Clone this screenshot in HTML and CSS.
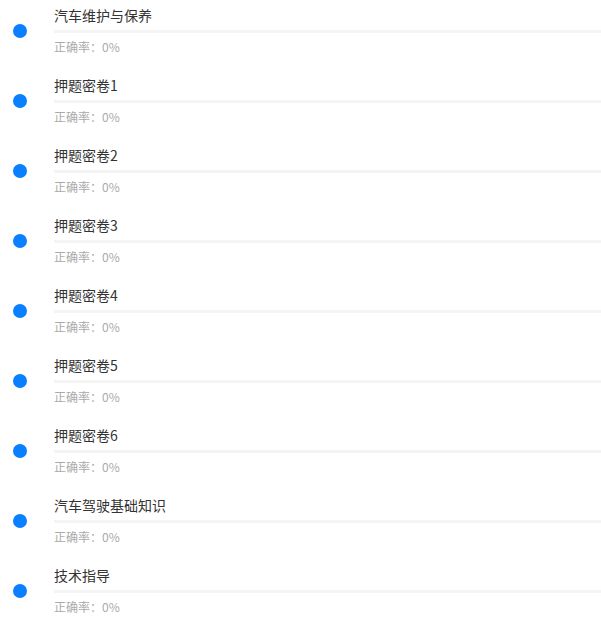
FILE: index.html
```html
<!DOCTYPE html>
<html lang="zh">
<head>
<meta charset="utf-8">
<link rel="stylesheet" href="styles.css">
</head>
<body>
<ul class="list">
  <li class="item"><span class="dot"></span><div class="content"><div class="title">汽车维护与保养</div><div class="bar"></div><div class="rate">正确率：0%</div></div></li>
  <li class="item"><span class="dot"></span><div class="content"><div class="title">押题密卷1</div><div class="bar"></div><div class="rate">正确率：0%</div></div></li>
  <li class="item"><span class="dot"></span><div class="content"><div class="title">押题密卷2</div><div class="bar"></div><div class="rate">正确率：0%</div></div></li>
  <li class="item"><span class="dot"></span><div class="content"><div class="title">押题密卷3</div><div class="bar"></div><div class="rate">正确率：0%</div></div></li>
  <li class="item"><span class="dot"></span><div class="content"><div class="title">押题密卷4</div><div class="bar"></div><div class="rate">正确率：0%</div></div></li>
  <li class="item"><span class="dot"></span><div class="content"><div class="title">押题密卷5</div><div class="bar"></div><div class="rate">正确率：0%</div></div></li>
  <li class="item"><span class="dot"></span><div class="content"><div class="title">押题密卷6</div><div class="bar"></div><div class="rate">正确率：0%</div></div></li>
  <li class="item"><span class="dot"></span><div class="content"><div class="title">汽车驾驶基础知识</div><div class="bar"></div><div class="rate">正确率：0%</div></div></li>
  <li class="item"><span class="dot"></span><div class="content"><div class="title">技术指导</div><div class="bar"></div><div class="rate">正确率：0%</div></div></li>
</ul>
</body>
</html>
```
FILE: styles.css
```css
html, body {
  margin: 0;
  padding: 0;
  background: #fff;
}
body {
  font-family: "Noto Sans CJK SC", "Noto Sans", sans-serif;
}
.list {
  list-style: none;
  margin: 0;
  padding: 0;
}
.item {
  display: flex;
  align-items: flex-start;
  height: 70px;
}
.dot {
  flex: none;
  width: 14px;
  height: 14px;
  border-radius: 50%;
  background: #0a7fff;
  margin-left: 13px;
  margin-right: 27px;
  margin-top: 24px;
}
.content {
  flex: 1;
  display: flex;
  flex-direction: column;
  height: 70px;
}
.title {
  margin-top: 4px;
  font-size: 14px;
  line-height: 22px;
  color: #333;
}
.bar {
  margin-top: 4px;
  height: 3px;
  background: #f4f4f4;
}
.rate {
  margin-top: 5px;
  font-size: 12px;
  line-height: 18px;
  color: #aaa;
}
```
